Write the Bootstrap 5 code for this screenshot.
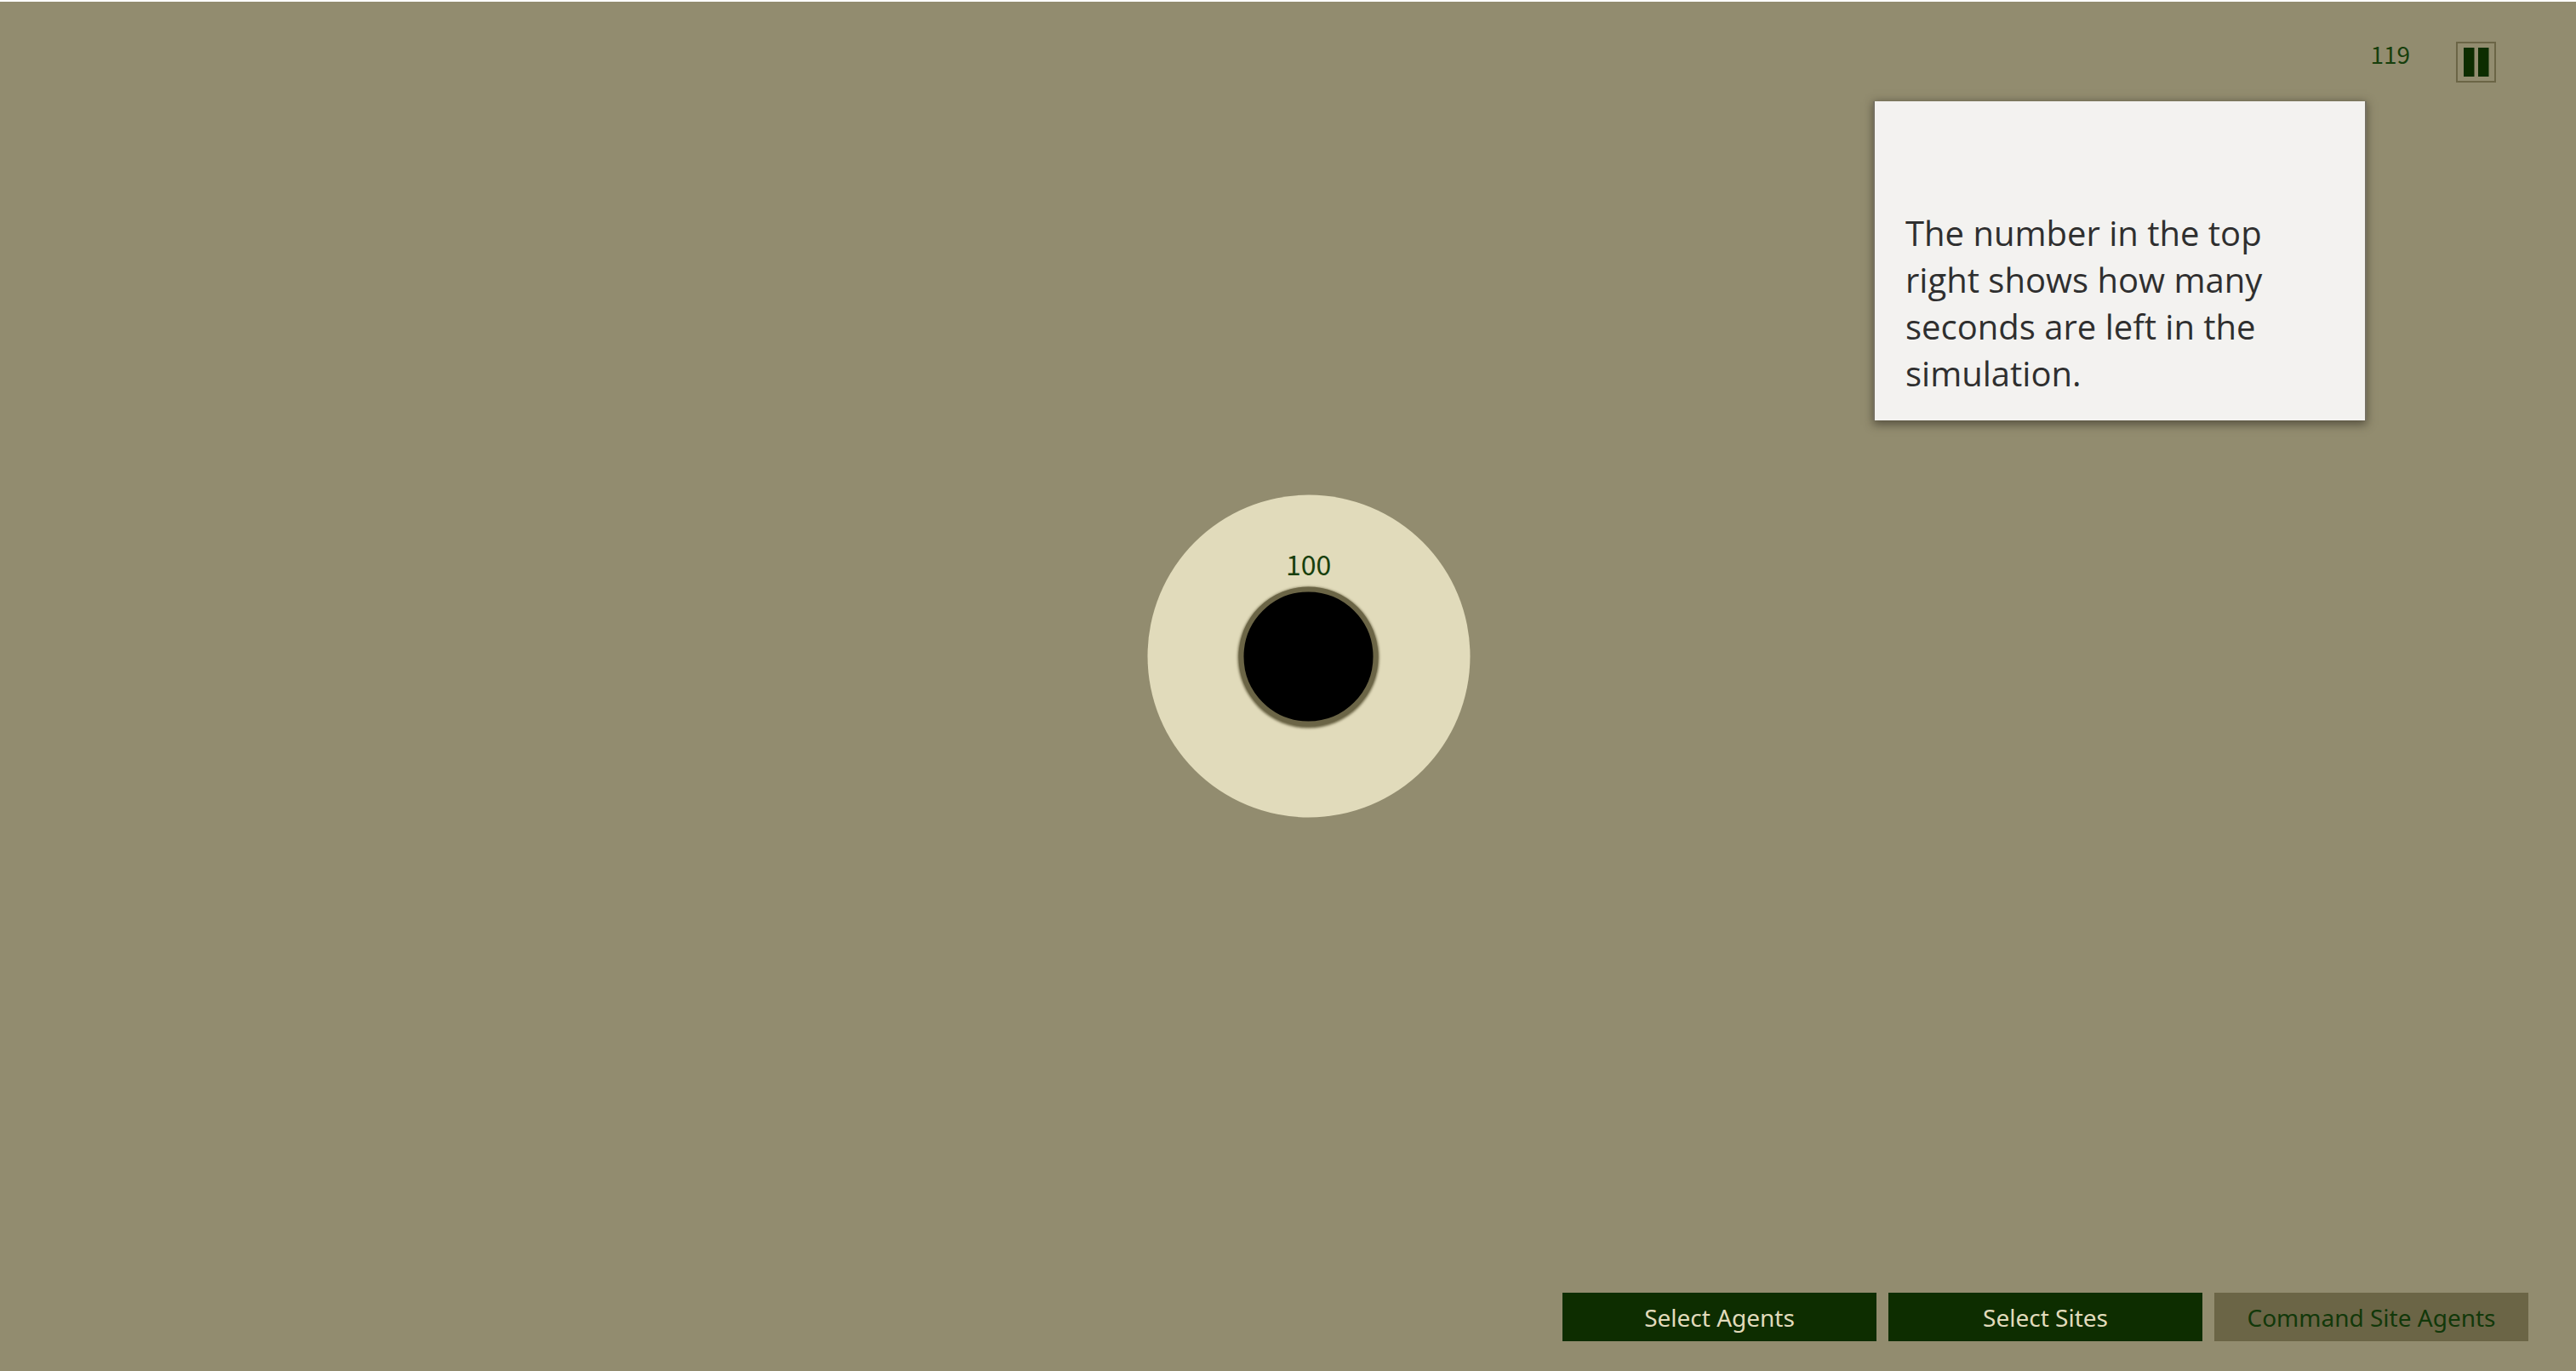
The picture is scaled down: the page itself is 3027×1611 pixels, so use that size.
<!DOCTYPE html>
<html lang="en">
<head>
<meta charset="utf-8">
<meta name="viewport" content="width=device-width, initial-scale=1">
<title>Swarm simulation</title>
<link href="https://cdn.jsdelivr.net/npm/bootstrap@5.3.0/dist/css/bootstrap.min.css" rel="stylesheet">
<style>
  :root { --field: #928c6f; --sand: #e1dbbb; --umber: #6b6546; --forest: #0d2d00; }
  body { background: var(--field); font-family: "Noto Sans", sans-serif; color: var(--forest); border-top: 2px solid #fff; }
  .topbar { padding: 47px 94px 0 0; gap: 54px; }
  .digits { font-family: "Noto Sans CJK JP", sans-serif; font-size: 28px; line-height: 28px; color: #173f0c; }
  .pause-btn { width: 47px; height: 48px; border: 2px solid var(--umber); background: transparent; }
  .hint { width: 576px; margin: 22px 248px 0 auto; padding: 127px 37px 28px 36px; background: #f3f2f0; color: #2f2f2f;
          font-family: "Open Sans", sans-serif; font-size: 40px; line-height: 55px; border-radius: 0;
          box-shadow: 2px 0 0 #767162, -2px 0 0 #767162, 0 3px 10px 2px rgba(50, 45, 35, .6); }
  .hint p { max-width: 440px; }
  /* The site is a map marker on the free simulation field. */
  .site { left: 50.8%; top: 47.8%; width: 379px; height: 379px; background: var(--sand); }
  .site-count { top: 60px; font-size: 32px; line-height: 40px; }
  .site-hole { width: 164px; height: 164px; background: #000; border: 6px solid var(--umber); box-shadow: 0 1px 3px 1px var(--umber); }
  .actions { gap: 14px; padding: 0 56px 35px; }
  .cmd { width: 369px; height: 57px; padding: 0; border: 0; border-radius: 0; font-size: 28px; line-height: 40px;
         background: var(--forest); color: var(--sand); }
  .cmd:hover { background: #184008; color: var(--sand); }
  .cmd:disabled { background: var(--umber); color: #12380a; opacity: 1; }
</style>
</head>
<body class="min-vh-100 d-flex flex-column position-relative">
  <header class="topbar d-flex justify-content-end align-items-start">
    <output class="digits" aria-label="Seconds left">119</output>
    <button type="button" class="pause-btn p-0 d-flex align-items-center justify-content-center" aria-label="Pause">
      <svg width="30" height="34" viewBox="0 0 30 34" aria-hidden="true"><path fill="#0d2d00" d="M0 0h12.500v34H0zM17 0h12.500v34H17z"/></svg>
    </button>
  </header>
  <main class="flex-grow-1">
    <section class="hint card border-0"><p class="m-0">The number in the top right shows how many seconds are left in the simulation.</p></section>
    <div class="site position-absolute translate-middle rounded-circle d-flex align-items-center justify-content-center">
      <span class="site-count digits position-absolute">100</span>
      <div class="site-hole rounded-circle"></div>
    </div>
  </main>
  <footer class="actions d-flex justify-content-end">
    <button type="button" class="cmd btn">Select Agents</button>
    <button type="button" class="cmd btn">Select Sites</button>
    <button type="button" class="cmd btn" disabled>Command Site Agents</button>
  </footer>
<script src="https://cdn.jsdelivr.net/npm/bootstrap@5.3.0/dist/js/bootstrap.bundle.min.js"></script>
</body>
</html>
